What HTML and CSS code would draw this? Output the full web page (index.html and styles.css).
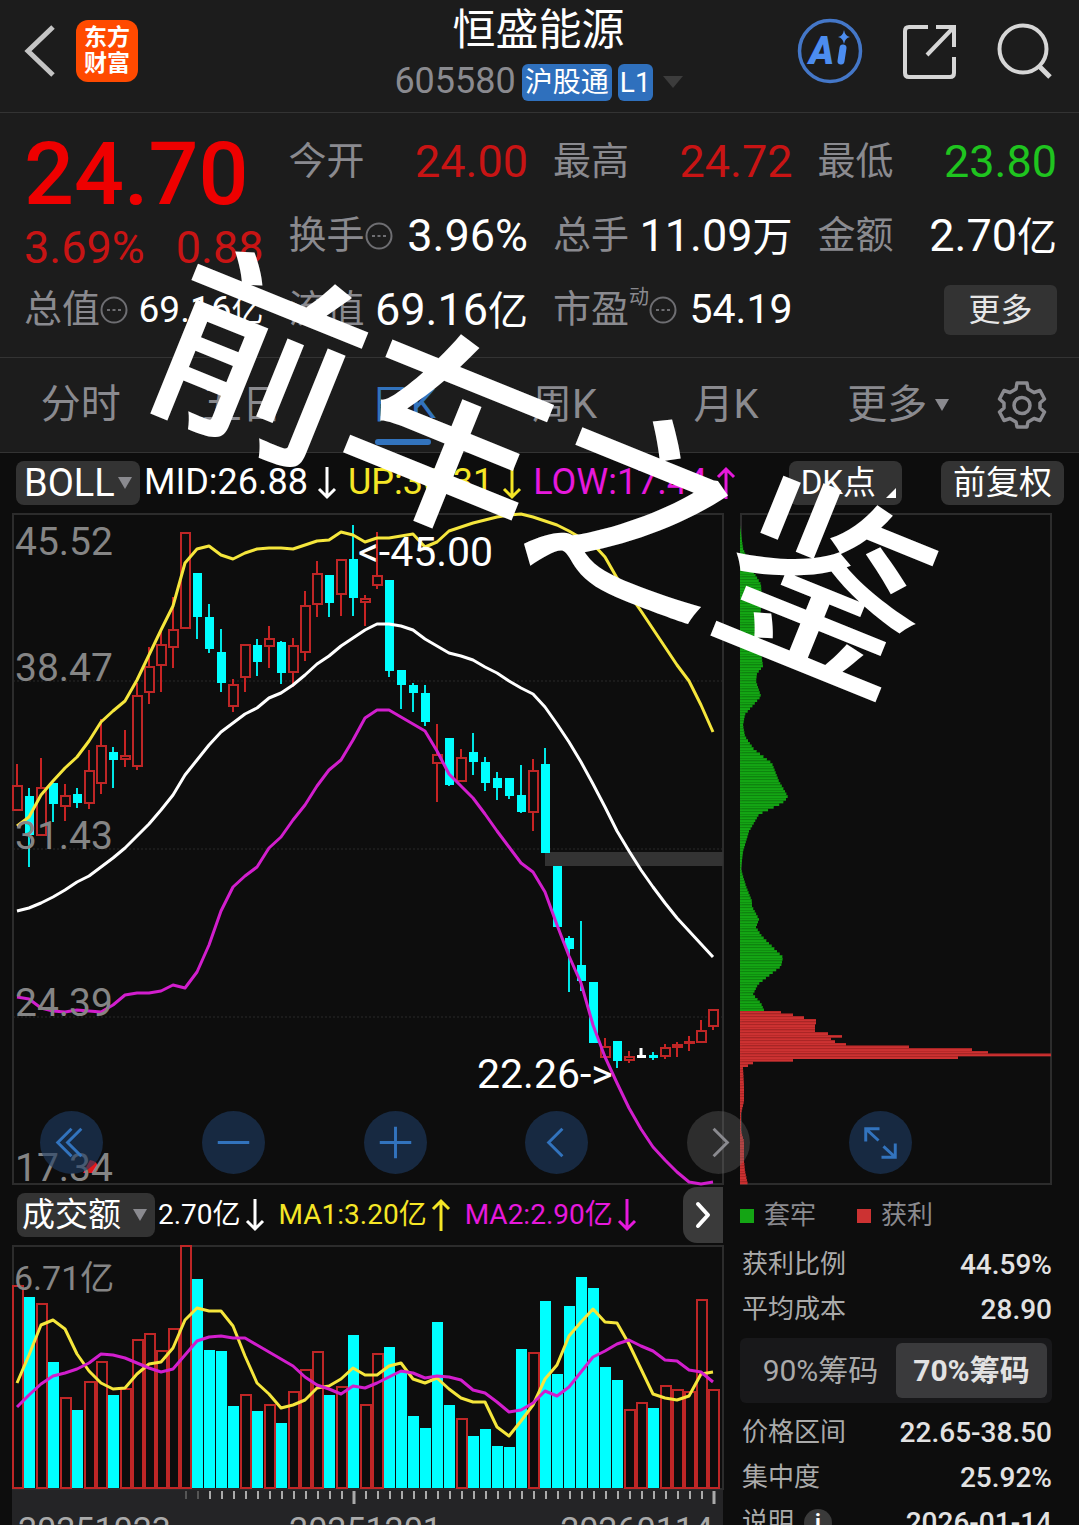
FILE: index.html
```html
<!DOCTYPE html>
<html lang="zh-CN">
<head>
<meta charset="utf-8">
<meta name="viewport" content="width=device-width, initial-scale=1">
<title>恒盛能源 605580</title>
<link rel="stylesheet" href="styles.css">
</head>
<body>
<div class="app">
  <header class="topbar">
    <div class="topbar-side">
      <button class="icon-btn" aria-label="返回">
        <svg width="32" height="52" viewBox="0 0 32 52"><path d="M29 2 4 26l25 24" fill="none" stroke="#c4c4c4" stroke-width="5"/></svg>
      </button>
      <a class="logo" href="#"><span>东方</span><span>财富</span></a>
    </div>
    <div class="topbar-title">
      <h1>恒盛能源</h1>
      <div class="subtitle">
        <span class="code">605580</span>
        <span class="tag">沪股通</span>
        <span class="tag tag-narrow">L1</span>
        <span class="caret caret-dark"></span>
      </div>
    </div>
    <div class="topbar-side topbar-actions">
      <button class="icon-btn" aria-label="Ai">
        <svg width="66" height="66" viewBox="0 0 66 66">
          <circle cx="33" cy="33" r="30.500" fill="none" stroke="#4477c8" stroke-width="3.500"/>
          <text x="12" y="46" class="ai-text">A</text>
          <path d="M46 30 44 43" stroke="#4c8df0" stroke-width="7" stroke-linecap="round"/>
          <path d="M47 12q1 6 6 7q-5 1-6 7q-1-6-6-7q5-1 6-7z" fill="#4c8df0"/>
        </svg>
      </button>
      <button class="icon-btn" aria-label="分享">
        <svg width="54" height="56" viewBox="0 0 54 56" fill="none" stroke="#d6d6d6" stroke-width="4">
          <path d="M25 4H6Q2 4 2 8v42q0 4 4 4h41q4 0 4-4V34"/><path d="M33 4h18v20M50 5 24 32"/>
        </svg>
      </button>
      <button class="icon-btn" aria-label="搜索">
        <svg width="56" height="56" viewBox="0 0 56 56" fill="none" stroke="#d6d6d6" stroke-width="4">
          <circle cx="26" cy="26" r="23.500"/><path d="m42 43 11 11" stroke-width="5"/>
        </svg>
      </button>
    </div>
  </header>

  <section class="quote">
    <div class="price-box">
      <div class="price">24.70</div>
      <div class="change"><span>3.69%</span><span>0.88</span></div>
    </div>
    <div class="stat"><span class="label">今开</span><span class="value up">24.00</span></div>
    <div class="stat"><span class="label">最高</span><span class="value up">24.72</span></div>
    <div class="stat"><span class="label">最低</span><span class="value down">23.80</span></div>
    <div class="stat"><span class="label">换手<svg class="info" viewBox="0 0 28 28"><circle cx="14" cy="14" r="12.500"/><path d="M7 14h3m2.500 0h3m2.500 0h3"/></svg></span><span class="value">3.96%</span></div>
    <div class="stat"><span class="label">总手</span><span class="value">11.09<i>万</i></span></div>
    <div class="stat"><span class="label">金额</span><span class="value">2.70<i>亿</i></span></div>
    <div class="stat"><span class="label">总值<svg class="info" viewBox="0 0 28 28"><circle cx="14" cy="14" r="12.500"/><path d="M7 14h3m2.500 0h3m2.500 0h3"/></svg></span><span class="value value-small">69.16<i>亿</i></span></div>
    <div class="stat"><span class="label">流值</span><span class="value">69.16<i>亿</i></span></div>
    <div class="stat"><span class="label">市盈<sup>动</sup><svg class="info" viewBox="0 0 28 28"><circle cx="14" cy="14" r="12.500"/><path d="M7 14h3m2.500 0h3m2.500 0h3"/></svg></span><span class="value value-mid">54.19</span></div>
    <div class="stat stat-end"><button class="more-btn">更多</button></div>
  </section>

  <nav class="tabs">
    <a href="#">分时</a>
    <a href="#">五日</a>
    <a href="#" class="active">日K</a>
    <a href="#">周K</a>
    <a href="#">月K</a>
    <a href="#">更多<span class="caret"></span></a>
    <button class="icon-btn gear" aria-label="设置">
      <svg width="50" height="50" viewBox="0 0 50 50" fill="none" stroke="#8a8a8f" stroke-width="3.500" stroke-linejoin="round">
        <path d="M20 3h10l1 6 6 3.500 6-2 4.500 8.500-4.500 4v5l4.500 4-4.500 8.500-6-2-6 3.500-1 5H20l-1-5-6-3.500-6 2L2.500 32 7 28v-5l-4.500-4L7 10.500l6 2L19 9z"/>
        <circle cx="25" cy="25.500" r="8"/>
      </svg>
    </button>
  </nav>

  <main class="board">
    <div class="indicator-bar">
      <label class="picker picker-boll"><select aria-label="主图指标"><option>BOLL</option></select></label>
      <div class="readings">
        <span class="reading">MID:26.88<svg class="arrow" viewBox="0 0 20 34"><path d="M10 1v30M2 23l8 8 8-8"/></svg></span>
        <span class="reading yellow">UP:36.31<svg class="arrow" viewBox="0 0 20 34"><path d="M10 1v30M2 23l8 8 8-8"/></svg></span>
        <span class="reading magenta">LOW:17.44<svg class="arrow" viewBox="0 0 20 34"><path d="M10 33V3M2 11l8-8 8 8"/></svg></span>
      </div>
      <button class="chip-btn chip-dk">DK点</button>
      <button class="chip-btn">前复权</button>
    </div>

    <div class="columns">
      <div class="left">
        <div class="main-chart">
          <svg id="kline" class="chart" viewBox="12 513 711 672"></svg>
          <div class="tools">
            <button class="tool" aria-label="最早"><svg viewBox="0 0 64 64"><path d="M32 18 18 32l14 14M42 18 28 32l14 14"/></svg></button>
            <button class="tool" aria-label="缩小"><svg viewBox="0 0 64 64"><path d="M16 32h32"/></svg></button>
            <button class="tool" aria-label="放大"><svg viewBox="0 0 64 64"><path d="M16 32h32M32 16v32"/></svg></button>
            <button class="tool" aria-label="向左"><svg viewBox="0 0 64 64"><path d="M38 18 24 32l14 14"/></svg></button>
            <button class="tool tool-off" aria-label="向右"><svg viewBox="0 0 64 64"><path d="m27 18 14 14-14 14"/></svg></button>
            <button class="tool" aria-label="全屏"><svg viewBox="0 0 64 64"><path d="M17 31V18h14M18 19l12 11M35 36l12 11M33 47h14V33"/></svg></button>
          </div>
        </div>
        <div class="volume-bar">
          <label class="picker picker-vol"><select aria-label="副图指标"><option>成交额</option></select></label>
          <div class="readings readings-small">
            <span class="reading">2.70亿<svg class="arrow" viewBox="0 0 20 34"><path d="M10 1v30M2 23l8 8 8-8"/></svg></span>
            <span class="reading yellow">MA1:3.20亿<svg class="arrow" viewBox="0 0 20 34"><path d="M10 33V3M2 11l8-8 8 8"/></svg></span>
            <span class="reading magenta">MA2:2.90亿<svg class="arrow" viewBox="0 0 20 34"><path d="M10 1v30M2 23l8 8 8-8"/></svg></span>
          </div>
          <button class="next-btn" aria-label="下一个"><svg width="16" height="28" viewBox="0 0 16 28"><path d="m3 3 10 11L3 25" fill="none" stroke="#fff" stroke-width="4" stroke-linecap="round" stroke-linejoin="round"/></svg></button>
        </div>
        <svg id="volume" class="chart" viewBox="12 1245 711 245"></svg>
        <div class="axis">
          <svg id="ticks" class="chart" viewBox="12 1490 711 16"></svg>
          <div class="dates"><span>20251023</span><span>20251201</span><span>20260114</span></div>
        </div>
      </div>

      <aside class="right">
        <svg id="chips" class="chart" viewBox="740 513 312 672"></svg>
        <div class="legend"><span class="key key-green">套牢</span><span class="key key-red">获利</span></div>
        <dl class="facts">
          <div><dt>获利比例</dt><dd>44.59%</dd></div>
          <div><dt>平均成本</dt><dd>28.90</dd></div>
        </dl>
        <div class="segment"><button>90%筹码</button><button class="on">70%筹码</button></div>
        <dl class="facts">
          <div><dt>价格区间</dt><dd>22.65-38.50</dd></div>
          <div><dt>集中度</dt><dd>25.92%</dd></div>
          <div><dt>说明<span class="info-dot">i</span></dt><dd>2026-01-14</dd></div>
        </dl>
      </aside>
    </div>
  </main>
  <div class="stamp">前车之鉴</div>
</div>
<script src="app.js"></script>
</body>
</html>
```
FILE: styles.css
```css
* { box-sizing: border-box; }

html, body { margin: 0; height: 100%; background: #0d0d0d; }

body {
  color: #fff;
  font-family: Roboto, "Noto Sans CJK SC", sans-serif;
  line-height: 1.2;
  overflow: hidden;
}

button, select {
  font-family: inherit;
  line-height: inherit;
  color: inherit;
  border: 0;
  padding: 0;
  margin: 0;
  background: none;
}

a { color: inherit; text-decoration: none; }
i { font-style: normal; }

.app { position: relative; height: 100vh; overflow: hidden; }

.icon-btn { display: flex; align-items: center; justify-content: center; }

/* top bar */
.topbar {
  display: grid;
  grid-template-columns: 1fr auto 1fr;
  height: 113px;
  padding: 0 26px 0 24px;
  background: #1c1c1c;
  border-bottom: 1px solid #333;
}
.topbar-side { display: flex; align-items: center; gap: 20px; height: 102px; }
.topbar-actions { justify-content: flex-end; gap: 40px; }
.logo {
  display: flex;
  flex-direction: column;
  align-items: center;
  justify-content: center;
  width: 62px;
  height: 62px;
  border-radius: 12px;
  background: #ff4a00;
  font-size: 23px;
  line-height: 26px;
  font-weight: 700;
}
.topbar-title { text-align: center; }
h1 { margin: 0; font-size: 43px; line-height: 60px; font-weight: 400; }
.subtitle { display: flex; align-items: center; gap: 6px; height: 44px; }
.code { font-size: 36px; color: #8a8a8f; }
.tag {
  height: 37px;
  padding: 0 3px;
  border-radius: 6px;
  background: #2f70bd;
  font-size: 28px;
  line-height: 38px;
}
.tag-narrow { padding: 0 2px; }
.caret {
  display: inline-block;
  border: 7px solid transparent;
  border-top: 12px solid #8a8a8f;
  border-bottom: 0;
}
.caret-dark { border-width: 12px 10px 0; border-top-color: #3c3c3c; margin-left: 4px; }
.ai-text { font: italic 900 38px Roboto, sans-serif; fill: #4c8df0; }

/* quote */
.quote {
  display: grid;
  grid-template-columns: repeat(4, 1fr);
  grid-auto-rows: 74px;
  column-gap: 25px;
  height: 245px;
  padding: 12px 22px 0 24px;
  background: #1c1c1c;
  border-bottom: 1px solid #333;
}
.price-box { grid-row: span 2; padding-top: 12px; }
.price { font-size: 88px; line-height: 74px; font-weight: 500; color: #ee0000; }
.change { display: flex; justify-content: space-between; font-size: 45px; line-height: 74px; color: #c81414; }
.stat { display: flex; align-items: center; justify-content: space-between; white-space: nowrap; }
.stat-end { justify-content: flex-end; }
.label { display: flex; align-items: center; font-size: 38px; color: #8a8a8f; }
.label sup { align-self: flex-start; font-size: 20px; line-height: 20px; }
.info { width: 28px; height: 28px; fill: none; stroke: #6e6e72; stroke-width: 2; }
.value { font-size: 45px; }
.value i { font-size: 40px; }
.value-small { font-size: 37px; }
.value-small i { font-size: 32px; }
.value-mid { font-size: 41px; }
.up { color: #c81414; }
.down { color: #1fc41f; }
.more-btn {
  width: 113px;
  height: 50px;
  border-radius: 6px;
  background: #333;
  font-size: 32px;
  color: #e6e6e6;
}

/* period tabs */
.tabs {
  display: flex;
  height: 95px;
  padding-right: 3px;
  background: #1c1c1c;
  border-bottom: 1px solid #333;
  color: #8a8a8f;
  font-size: 40px;
}
.tabs a {
  position: relative;
  flex: 1;
  display: flex;
  align-items: center;
  justify-content: center;
  gap: 8px;
}
.tabs .caret { margin-right: -22px; }
.tabs .active { color: #3273bd; }
.tabs .active::after {
  content: "";
  position: absolute;
  bottom: 7px;
  width: 56px;
  height: 6px;
  border-radius: 3px;
  background: #3273bd;
}
.gear { flex: none; width: 108px; }

/* chart board */
.indicator-bar {
  display: flex;
  align-items: center;
  height: 60px;
  padding: 0 15px 0 16px;
}
.picker { position: relative; flex: none; height: 44px; border-radius: 8px; background: #333; }
.picker select {
  width: 100%;
  height: 44px;
  padding-left: 8px;
  appearance: none;
  font-size: 38px;
}
.picker::after {
  content: "";
  position: absolute;
  top: 16px;
  right: 8px;
  border: 7px solid transparent;
  border-top: 12px solid #8a8a8f;
  border-bottom: 0;
}
.picker-boll { width: 124px; }
.picker-vol { width: 138px; }
.picker-vol select { padding-left: 5px; font-size: 33px; }
.readings { display: flex; flex: 1; gap: 11px; padding-left: 4px; font-size: 36px; white-space: nowrap; }
.reading { display: flex; align-items: center; gap: 9px; }
.arrow { width: 20px; height: 34px; fill: none; stroke: currentColor; stroke-width: 3; }
.yellow { color: #f5e626; }
.magenta { color: #e619dc; }
.chip-btn { height: 44px; padding: 0 12px; border-radius: 8px; background: #333; font-size: 33px; }
.chip-dk { position: relative; padding-right: 26px; margin-right: 39px; }
.chip-dk::after {
  content: "";
  position: absolute;
  right: 6px;
  bottom: 7px;
  border: 5px solid #fff;
  border-top-color: transparent;
  border-left-color: transparent;
}

.columns {
  display: grid;
  grid-template-columns: 711fr 312fr;
  column-gap: 17px;
  padding: 0 27px 0 12px;
}
.left, .right { min-width: 0; }
.chart { display: block; width: 100%; overflow: visible; }
.main-chart { position: relative; }

.frame { fill: none; stroke: #2c2c2c; stroke-width: 2; }
.grid-line { stroke: #2a2a2a; stroke-width: 1; stroke-dasharray: 2 2; }
.scale { fill: #858585; font-size: 39px; }
.mark { fill: #fff; font-size: 41px; }
.vol-scale { fill: #858585; font-size: 34px; }
.line { fill: none; stroke-width: 3; stroke-linejoin: round; }
.line-mid { stroke: #fff; }
.line-up { stroke: #f5e63c; }
.line-low { stroke: #d21ecd; }
.rise { fill: #0d0d0d; stroke: #be2626; stroke-width: 2; }
.fall { fill: #00ffff; stroke: none; }
.flat { fill: #fff; }
.wick-r { stroke: #c82323; stroke-width: 2; }
.wick-c { stroke: #00e6e6; stroke-width: 2; }
.wick-w { stroke: #fff; stroke-width: 3; }

/* the tool row runs on over the distribution chart */
.tools {
  position: absolute;
  left: 28px;
  right: -189px;
  bottom: 11px;
  display: flex;
  justify-content: space-between;
  z-index: 1;
}
.tool { width: 63px; height: 63px; border-radius: 50%; background: rgba(30, 60, 100, .6); }
.tool svg { display: block; fill: none; stroke: #3273bd; stroke-width: 3; }
.tool-off { background: rgba(120, 120, 120, .3); }
.tool-off svg { stroke: #8a8a8f; }

.volume-bar { display: flex; align-items: center; height: 60px; padding-left: 5px; }
.readings-small { gap: 14px; padding-left: 3px; font-size: 28px; }
.readings-small .reading { gap: 4px; }
.next-btn {
  display: flex;
  flex: none;
  align-items: center;
  justify-content: center;
  width: 40px;
  height: 56px;
  border-radius: 14px 0 0 14px;
  background: #3a3a3a;
}

.axis { background: #242426; height: 80px; }
.dates {
  display: flex;
  justify-content: space-between;
  padding: 3px 10px 0 6px;
  color: #aaa;
  font-size: 34px;
  line-height: 40px;
}

/* cost distribution */
.legend { display: flex; gap: 41px; height: 57px; padding-top: 4px; align-items: center; font-size: 26px; color: #8a8a8f; }
.key { display: flex; align-items: center; gap: 10px; }
.key::before { content: ""; width: 14px; height: 14px; background: #14a514; }
.key-red::before { background: #cc3232; }
.facts { margin: 0; }
.facts div { display: flex; justify-content: space-between; align-items: center; height: 45px; padding-left: 2px; }
.facts dt { display: flex; align-items: center; gap: 10px; font-size: 26px; color: #aaa; }
.facts dd { margin: 0; font-size: 28px; font-weight: 500; color: #e2e2e2; }
.info-dot {
  width: 28px;
  height: 28px;
  border-radius: 50%;
  background: #3a3a3a;
  color: #fff;
  font-size: 22px;
  line-height: 28px;
  font-weight: 700;
  text-align: center;
}
.segment {
  display: flex;
  height: 65px;
  margin: 6px 0 7px;
  padding: 5px;
  border-radius: 6px;
  background: #18181a;
}
.segment button { flex: 1; border-radius: 6px; font-size: 30px; color: #aaa; }
.segment .on { background: #3a3a3c; color: #e2e2e2; font-weight: 700; }

.stamp {
  position: absolute;
  z-index: 2;
  left: 50%;
  top: 479px;
  font-size: 204px;
  line-height: 1;
  font-weight: 500;
  white-space: nowrap;
  transform: translate(-50%, -50%) rotate(22deg);
  pointer-events: none;
}
```
FILE: app.js
```js
const NS = 'http://www.w3.org/2000/svg';
const STEP = 12;
const FIRST = 17;
const xAt = i => FIRST + STEP * i;

function add(parent, name, attrs, text) {
  const el = document.createElementNS(NS, name);
  for (const key in attrs) el.setAttribute(key, attrs[key]);
  if (text) el.textContent = text;
  parent.appendChild(el);
}

function line(parent, values, cls) {
  add(parent, 'polyline', { class: 'line ' + cls, points: values.map((y, i) => xAt(i) + ',' + y).join(' ') });
}

// kind, high, body top, body bottom, low
const candles = [
  ['r',764,785,811,811],['c',788,796,835,867],['r',758,787,836,836],['c',783,783,804,822],['r',784,795,807,821],
  ['c',788,794,803,808],['r',750,770,804,809],['r',719,745,784,794],['c',747,752,760,788],['r',730,755,760,767],
  ['r',683,695,767,770],['r',647,666,693,704],['r',632,644,666,692],['r',597,629,648,668],['r',532,532,629,629],
  ['c',573,573,617,639],['c',604,617,649,653],['c',629,652,683,692],['r',679,684,707,712],['r',644,644,678,692],
  ['c',639,645,662,676],['r',626,638,647,668],['c',641,642,673,684],['r',638,645,673,687],['r',591,605,653,661],
  ['r',561,573,605,617],['c',575,575,603,617],['r',559,559,595,616],['c',525,559,598,616],['r',595,598,603,626],
  ['r',532,575,586,589],['c',580,580,671,677],['c',670,670,685,709],['c',683,685,693,712],['c',685,693,722,726],
  ['r',724,754,764,802],['c',738,738,785,786],['r',749,757,782,782],['c',733,752,762,775],['c',757,762,783,791],
  ['c',772,778,788,800],['c',778,778,796,799],['c',765,795,812,813],['r',759,770,813,831],['c',748,764,853,853],
  ['c',866,866,927,927],['c',936,938,949,992],['c',921,965,981,991],['c',982,982,1043,1043],['r',1038,1046,1058,1058],
  ['c',1041,1041,1061,1068],['r',1051,1056,1061,1063],['w',1048,1055,1058,1058],['c',1052,1055,1058,1060],['r',1044,1047,1057,1059],
  ['r',1042,1044,1048,1057],['r',1036,1041,1043,1051],['r',1020,1030,1043,1043],['r',1009,1009,1027,1030]
];
const upper = [826,817,795,781,768,757,741,722,711,701,680,655,630,606,563,549,546,555,559,553,549,548,548,549,545,541,540,532,535,542,538,538,536,534,547,542,531,527,523,520,517,515,514,517,521,525,531,538,544,557,578,594,611,629,647,665,681,705,732];
const middle = [911,908,903,897,890,882,876,867,858,848,836,824,810,795,775,760,745,732,723,714,708,698,693,685,675,664,656,646,638,630,624,624,626,630,639,646,653,656,660,667,673,681,688,694,707,724,742,762,784,807,831,851,870,887,903,918,931,944,957];
const lower = [997,999,1008,1011,1012,1010,1011,1012,1005,995,993,993,991,985,988,972,945,911,887,876,867,848,837,820,805,786,770,760,740,718,710,710,717,724,731,751,774,786,798,814,831,847,863,872,892,925,956,983,1025,1057,1083,1108,1129,1147,1160,1172,1182,1184,1182];

const kline = document.getElementById('kline');
add(kline, 'rect', { class: 'frame', x: 13, y: 514, width: 710, height: 670 });
[681, 849, 1017].forEach(y => add(kline, 'line', { class: 'grid-line', x1: 13, x2: 722, y1: y, y2: y }));
add(kline, 'rect', { x: 545, y: 852, width: 178, height: 14, fill: '#333' });
candles.forEach(([kind, high, top, bottom, low], i) => {
  const x = xAt(i);
  add(kline, 'line', { class: 'wick-' + kind, x1: x, x2: x, y1: high, y2: low });
  if (kind === 'r') add(kline, 'rect', { class: 'rise', x: x - 4, y: top + 1, width: 9, height: Math.max(bottom - top - 2, 1) });
  else add(kline, 'rect', { class: kind === 'w' ? 'flat' : 'fall', x: x - 4, y: top, width: 9, height: bottom - top });
});
line(kline, upper, 'line-up');
line(kline, middle, 'line-mid');
line(kline, lower, 'line-low');
add(kline, 'path', { d: 'M83 1173 90 1160q8 1 8 8q0 5-4 5z', fill: '#e11919' });
[['45.52', 555], ['38.47', 681], ['31.43', 849], ['24.39', 1016], ['17.34', 1181]]
  .forEach(([t, y]) => add(kline, 'text', { class: 'scale', x: 15, y }, t));
add(kline, 'text', { class: 'mark', x: 358, y: 566 }, '<-45.00');
add(kline, 'text', { class: 'mark', x: 477, y: 1088 }, '22.26->');

// turnover bars: kind, top
const bars = 'r1286 c1297 r1304 c1362 r1398 c1410 r1382 r1362 c1395 r1389 r1340 r1334 r1351 r1329 r1246 c1279 c1350 c1351 c1406 r1395 c1411 r1405 c1423 r1392 r1370 r1352 c1395 r1387 c1335 r1405 r1354 c1347 c1372 c1416 c1428 c1322 c1405 r1419 c1436 c1429 c1446 c1447 c1349 r1353 c1301 c1374 c1306 c1277 c1288 c1367 c1380 r1410 r1403 c1408 r1386 r1390 r1392 r1300 r1390'.split(' ');
const ma1 = [1383,1355,1325,1320,1329,1354,1371,1383,1389,1388,1374,1364,1362,1348,1320,1308,1311,1311,1326,1356,1383,1394,1408,1405,1400,1388,1386,1379,1368,1375,1375,1366,1363,1379,1383,1378,1389,1398,1402,1402,1427,1436,1421,1405,1379,1365,1336,1322,1309,1322,1323,1344,1369,1394,1398,1400,1396,1374,1372];
const ma2 = [1407,1395,1384,1376,1373,1369,1363,1354,1355,1358,1363,1368,1372,1369,1355,1341,1337,1336,1338,1338,1345,1352,1359,1366,1377,1385,1389,1394,1386,1388,1383,1377,1371,1373,1378,1376,1377,1380,1390,1393,1402,1412,1410,1403,1391,1396,1387,1372,1357,1351,1344,1340,1346,1351,1360,1361,1370,1372,1382];

const volume = document.getElementById('volume');
add(volume, 'rect', { class: 'frame', x: 13, y: 1246, width: 710, height: 243 });
bars.forEach((bar, i) => {
  const x = xAt(i);
  const top = Number(bar.slice(1));
  if (bar[0] === 'r') add(volume, 'rect', { class: 'rise', x: x - 4, y: top, width: 10, height: 1488 - top });
  else add(volume, 'rect', { class: 'fall', x: x - 5, y: top, width: 11, height: 1488 - top });
});
line(volume, ma1, 'line-up');
line(volume, ma2, 'line-low');
add(volume, 'text', { class: 'vol-scale', x: 14, y: 1290 }, '6.71亿');

const ticks = document.getElementById('ticks');
for (let x = 186; x <= 714; x += STEP) {
  const major = x === 354 || x === 714;
  add(ticks, 'line', { x1: x, x2: x, y1: 1491, y2: major ? 1504 : 1499, stroke: x < 210 ? '#555' : '#aaa', 'stroke-width': major ? 3 : 2 });
}

// holders' cost: [y, width] outline, resampled into thin rows
const trapped = [[525,0],[547,3],[565,10],[583,21],[600,22],[630,18],[665,23],[672,17],[680,16],[695,21],[713,5],[724,3],[735,5],[748,14],[762,32],[780,39],[790,45],[796,48],[802,42],[813,19],[830,9],[850,3],[868,1],[885,6],[900,12],[905,12],[918,19],[926,16],[935,22],[950,37],[956,43],[965,41],[975,28],[983,18],[993,13],[1002,21],[1011,25]];
const profitTail = [[1067,3],[1085,4],[1100,4],[1112,1],[1130,1],[1140,4],[1160,4],[1170,5],[1184,8]];
const profitRows = [41,53,64,76,76,75,75,75,88,102,91,95,106,169,232,248,311,218,53,13,8];
const ROW = 8 / 3;

function sample(outline, y) {
  const i = Math.max(1, outline.findIndex(p => p[0] >= y));
  const [y0, w0] = outline[i - 1];
  const [y1, w1] = outline[i];
  return w0 + (w1 - w0) * (y - y0) / (y1 - y0);
}

const chips = document.getElementById('chips');
function chipRow(y, width, fill, edge) {
  add(chips, 'rect', { x: 740, y, width, height: ROW, fill });
  add(chips, 'rect', { x: 740, y, width, height: 0.7, fill: edge });
}
add(chips, 'rect', { class: 'frame', x: 741, y: 514, width: 310, height: 670 });
for (let y = 526; y < 1010; y += ROW) chipRow(y, sample(trapped, y), '#14a514', '#0e860e');
profitRows.forEach((w, i) => chipRow(1011 + i * ROW, w, '#cc3232', '#b02424'));
for (let y = 1067; y < 1183; y += ROW) chipRow(y, sample(profitTail, y), '#cc3232', '#b02424');
```
